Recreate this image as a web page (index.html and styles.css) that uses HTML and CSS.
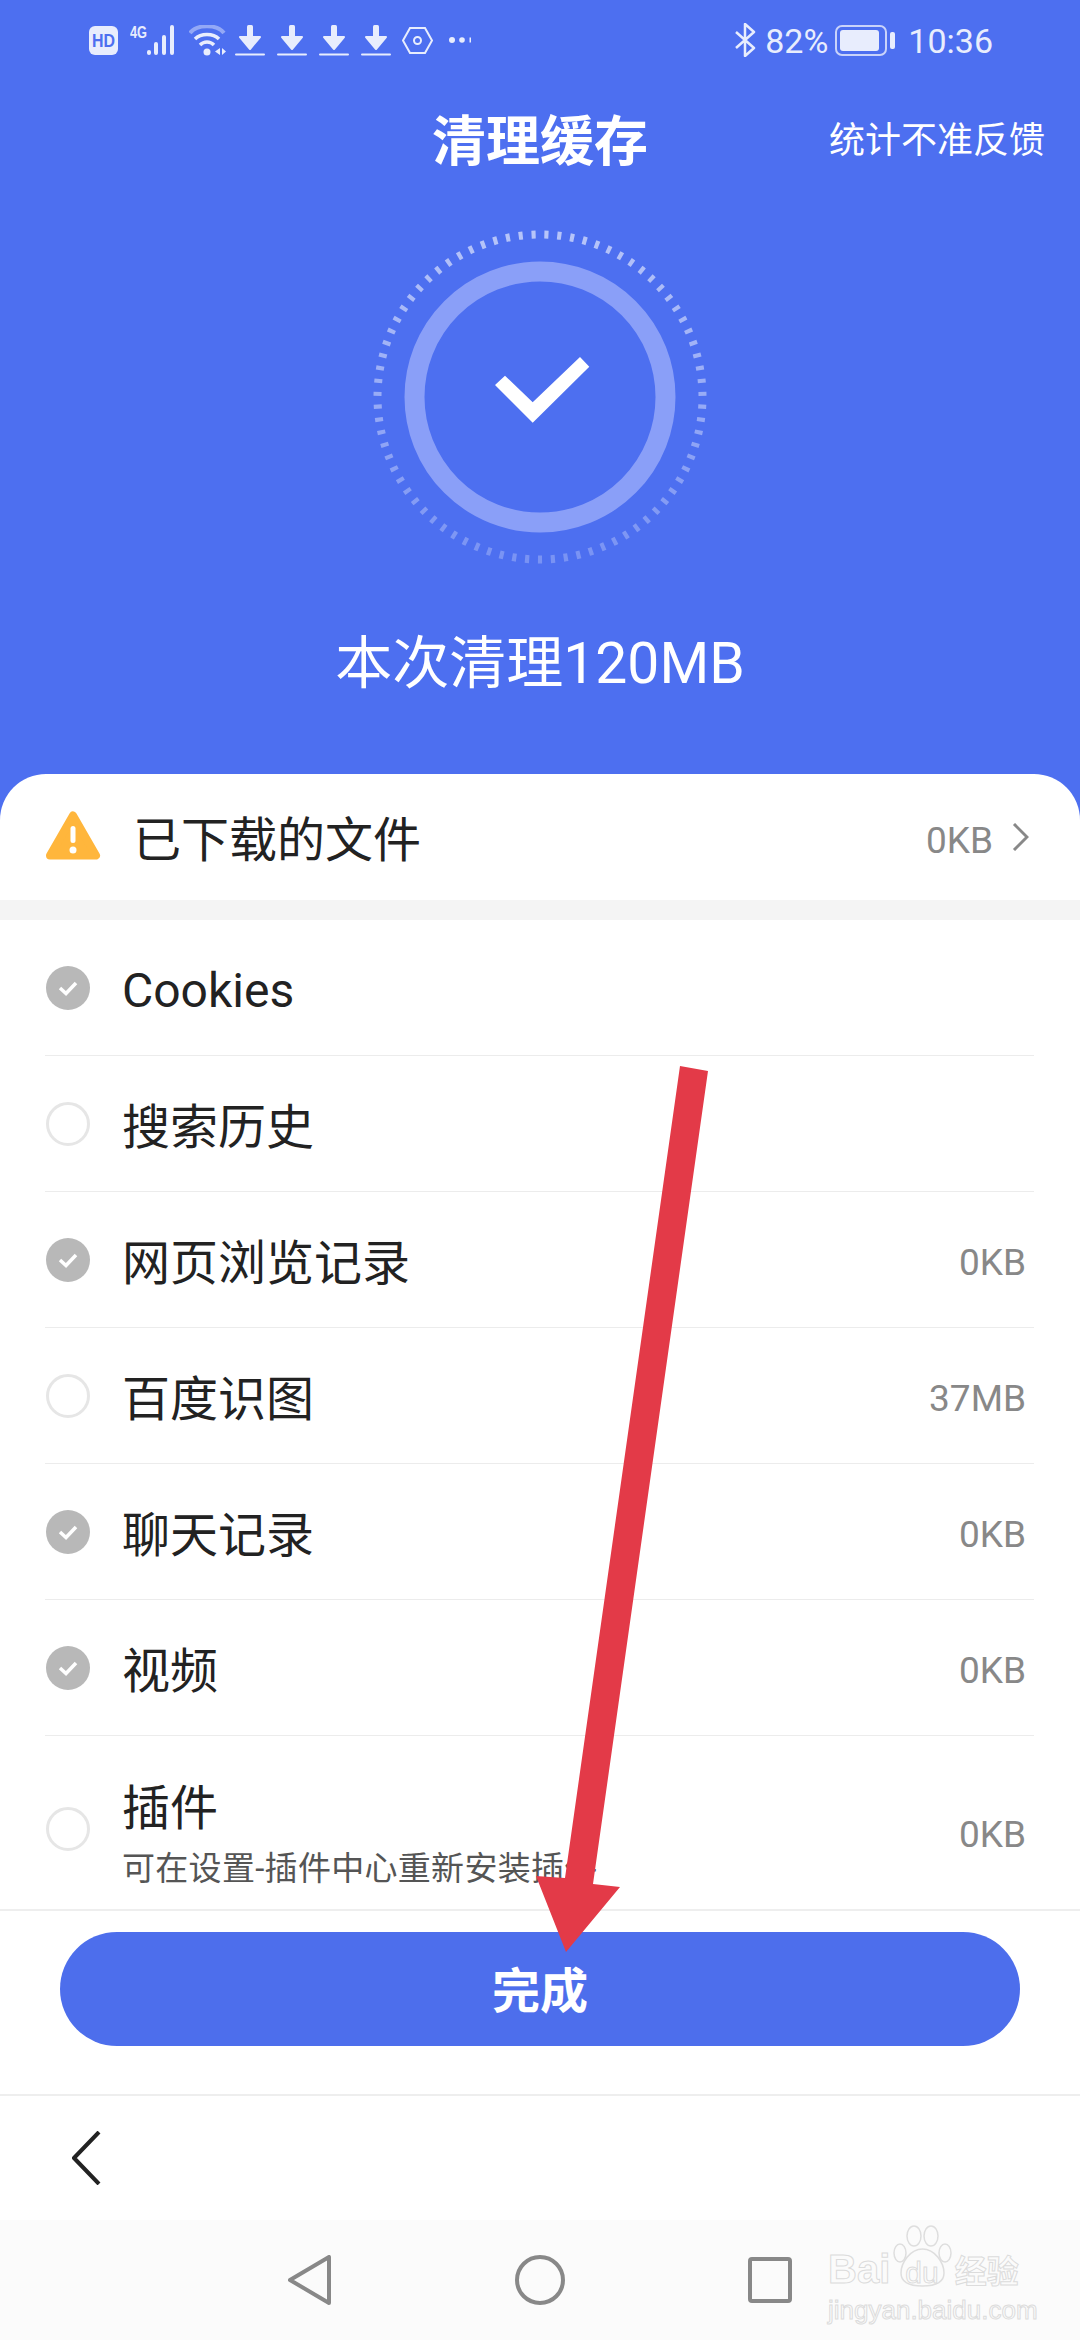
FILE: index.html
```html
<!DOCTYPE html>
<html>
<head>
    <title>清理缓存</title>
    <link rel="stylesheet" href="styles.css">
</head>
<body>
    <div class="page">
        <div class="hero">
            <div class="status-bar">
                <div class="status-left">
                    <svg width="29" height="29" viewBox="0 0 29 29"><rect width="29" height="29" rx="6" fill="#e8edfd"/><text x="14.5" y="21" text-anchor="middle" class="hd-text" textLength="23" lengthAdjust="spacingAndGlyphs">HD</text></svg>
                    <svg class="gap-12" width="49" height="30" viewBox="0 0 49 30"><text x="0" y="13" class="net-text" textLength="17" lengthAdjust="spacingAndGlyphs">4G</text><rect x="17" y="25" width="4" height="5" rx="2" fill="#e8edfd"/><rect x="24" y="17" width="4" height="13" rx="2" fill="#e8edfd"/><rect x="32" y="10" width="4" height="20" rx="2" fill="#e8edfd"/><rect x="40" y="0" width="4" height="30" rx="2" fill="#e8edfd"/></svg>
                    <svg class="gap-10" width="37" height="31" viewBox="0 0 37 31" fill="none" stroke="#e8edfd" stroke-width="3.500"><path d="M1 8C8 -1 28 -1 35 8" stroke-opacity=".45" stroke-width="4"/><path d="M6 14C12 8 24 8 30 14"/><path d="M11 20C15 16 21 16 25 20"/><circle cx="18" cy="27" r="3.500" fill="#e8edfd" stroke="none"/><path d="M31 23L26 26.500L31 30ZM33 23L37 26.500L33 30Z" fill="#e8edfd" stroke="none"/></svg>
                    <svg class="gap-9" width="30" height="31"><use href="#dl"/></svg>
                    <svg class="gap-12" width="30" height="31"><use href="#dl"/></svg>
                    <svg class="gap-12" width="30" height="31"><use href="#dl"/></svg>
                    <svg class="gap-12" width="30" height="31"><use href="#dl"/></svg>
                    <svg class="gap-11" width="31" height="27" viewBox="0 0 31 27" fill="none" stroke="#e8edfd" stroke-width="2"><path d="M1 13.500L8 1H23L30 13.500L23 26H8Z"/><circle cx="15.500" cy="13.500" r="3.500"/></svg>
                    <svg class="gap-16" width="22" height="8" viewBox="0 0 22 8" fill="#e8edfd"><circle cx="3" cy="4" r="3"/><circle cx="13" cy="4" r="2.800"/><rect x="20.500" y="1.500" width="1.500" height="5"/></svg>
                </div>
                <div class="status-right">
                    <svg width="22" height="34" viewBox="0 0 22 34" fill="none" stroke="#e8edfd" stroke-width="2.500" stroke-linejoin="round"><path d="M2 9L20 25L11 33V1L20 9L2 25"/></svg>
                    <span class="status-pct">82%</span>
                    <svg class="battery" width="60" height="31" viewBox="0 0 60 31"><rect x="1" y="1" width="50" height="29" rx="6" fill="none" stroke="#c9d3fa" stroke-width="2"/><rect x="5" y="5" width="39" height="21" rx="3" fill="#e8edfd"/><rect x="55" y="7" width="5" height="17" rx="2" fill="#e8edfd"/></svg>
                    <span class="status-time">10:36</span>
                </div>
            </div>

            <div class="title-bar">
                <span></span>
                <h1>清理缓存</h1>
                <a class="feedback">统计不准反馈</a>
            </div>

            <svg class="ring" width="340" height="340" viewBox="0 0 340 340">
                <defs>
                    <linearGradient id="tick-fade" gradientUnits="userSpaceOnUse" x1="0" y1="0" x2="0" y2="340">
                        <stop offset="0" stop-color="#fff" stop-opacity=".6"/>
                        <stop offset="1" stop-color="#fff" stop-opacity=".24"/>
                    </linearGradient>
                </defs>
                <circle cx="170" cy="170" r="162.500" fill="none" stroke="url(#tick-fade)" stroke-width="8" pathLength="79" stroke-dasharray=".32 .68" stroke-dashoffset=".41"/>
                <circle cx="170" cy="170" r="125.500" fill="none" stroke="#8a9ff8" stroke-width="20"/>
                <polygon points="125,158 135,148.700 162.700,175.300 210,130 219.300,139.700 162.700,195.700" fill="#fff"/>
            </svg>

            <div class="result">本次清理120MB</div>
        </div>

        <div class="sheet">
            <div class="notice">
                <svg class="warn" width="56" height="50" viewBox="0 0 56 50"><path d="M28 4.500L51 44.500H5Z" fill="#ffb63c" stroke="#ffb63c" stroke-width="8" stroke-linejoin="round"/><rect x="25.500" y="15" width="5" height="17" rx="2.500" fill="#fff"/><circle cx="28" cy="39" r="3.500" fill="#fff"/></svg>
                <span class="notice-name">已下载的文件</span>
                <span class="size">0KB</span>
                <svg class="chevron" width="17" height="28" viewBox="0 0 17 28" fill="none" stroke="#888" stroke-width="3"><path d="M2 1L15 14L2 27"/></svg>
            </div>

            <div class="list">
                <div class="row">
                    <span class="check on"><svg width="22" height="18" viewBox="0 0 22 18" fill="none" stroke="#fff" stroke-width="3.500"><path d="M3 9L9 14.500L19 4"/></svg></span>
                    <span class="name latin">Cookies</span>
                </div>
                <div class="row">
                    <span class="check"></span>
                    <span class="name">搜索历史</span>
                </div>
                <div class="row">
                    <span class="check on"><svg width="22" height="18" viewBox="0 0 22 18" fill="none" stroke="#fff" stroke-width="3.500"><path d="M3 9L9 14.500L19 4"/></svg></span>
                    <span class="name">网页浏览记录</span>
                    <span class="size">0KB</span>
                </div>
                <div class="row">
                    <span class="check"></span>
                    <span class="name">百度识图</span>
                    <span class="size">37MB</span>
                </div>
                <div class="row">
                    <span class="check on"><svg width="22" height="18" viewBox="0 0 22 18" fill="none" stroke="#fff" stroke-width="3.500"><path d="M3 9L9 14.500L19 4"/></svg></span>
                    <span class="name">聊天记录</span>
                    <span class="size">0KB</span>
                </div>
                <div class="row">
                    <span class="check on"><svg width="22" height="18" viewBox="0 0 22 18" fill="none" stroke="#fff" stroke-width="3.500"><path d="M3 9L9 14.500L19 4"/></svg></span>
                    <span class="name">视频</span>
                    <span class="size">0KB</span>
                </div>
                <div class="row row-last">
                    <span class="check"></span>
                    <div class="name-block">
                        <div class="name">插件</div>
                        <div class="note">可在设置-插件中心重新安装插件</div>
                    </div>
                    <span class="size">0KB</span>
                </div>
            </div>

            <div class="done-wrap">
                <button class="done">完成</button>
            </div>

            <div class="toolbar">
                <svg width="30" height="54" viewBox="0 0 30 54" fill="none" stroke="#222" stroke-width="4"><path d="M28 1L3 27L28 53" stroke-linejoin="round"/></svg>
            </div>

            <div class="nav-bar">
                <svg width="44" height="50" viewBox="0 0 44 50" fill="none" stroke="#888" stroke-width="4" stroke-linejoin="round"><path d="M41 2V48L2 25Z"/></svg>
                <svg width="50" height="50" viewBox="0 0 50 50" fill="none" stroke="#888" stroke-width="4"><circle cx="25" cy="25" r="23"/></svg>
                <svg width="44" height="46" viewBox="0 0 44 46" fill="none" stroke="#888" stroke-width="4" stroke-linejoin="round"><rect x="2" y="2" width="40" height="42" rx="2"/></svg>
            </div>
        </div>

        <div class="watermark">
            <svg class="paw" width="59" height="62" viewBox="0 0 59 62" fill="none" stroke="#dedede" stroke-width="1.500"><ellipse cx="21" cy="11" rx="7" ry="10"/><ellipse cx="38" cy="11" rx="7" ry="10"/><ellipse cx="7" cy="28" rx="6" ry="9"/><ellipse cx="52" cy="28" rx="6" ry="9"/><path d="M29.500 24C17 24 8 38 8 48C8 58 18 61 29.500 61C41 61 51 58 51 48C51 38 42 24 29.500 24Z"/></svg>
            <div class="wm-logo"><span>Bai</span><span class="wm-du">du</span><span>经验</span></div>
            <div class="wm-url">jingyan.baidu.com</div>
        </div>

        <svg class="arrow" width="1080" height="2340" viewBox="0 0 1080 2340"><polygon points="680,1066 708,1071 593,1884 620,1887 566,1952 536,1876 565,1878" fill="#e33a48"/></svg>
    </div>

    <svg width="0" height="0" class="defs">
        <symbol id="dl" viewBox="0 0 30 31">
            <rect x="12" y="0" width="6" height="13" rx="1.500" fill="#e8edfd"/>
            <path d="M5 12H25L15 24Z" fill="#e8edfd" stroke="#e8edfd" stroke-width="2" stroke-linejoin="round"/>
            <rect x="0" y="28.500" width="30" height="2" rx="1" fill="#e8edfd"/>
        </symbol>
    </svg>
</body>
</html>
```

FILE: styles.css
```css
body {
    margin: 0;
    font-family: Roboto, "Noto Sans CJK SC", sans-serif;
    color: #222;
}
.page {
    position: relative;
    width: 1080px;
    height: 2340px;
    overflow: hidden;
    display: flex;
    flex-direction: column;
    background-color: #4d6ff0;
}
.defs {
    position: absolute;
}
.hero {
    height: 774px;
    flex-shrink: 0;
    display: flex;
    flex-direction: column;
    align-items: center;
    color: #fff;
}
.status-bar {
    width: 100%;
    height: 80px;
    box-sizing: border-box;
    padding: 0 87px 0 89px;
    display: flex;
    justify-content: space-between;
    align-items: center;
}
.status-left,
.status-right {
    display: flex;
    align-items: center;
}
.status-right {
    color: #e8edfd;
    font-size: 34px;
}
.status-right span {
    padding-top: 2px;
}
.status-pct {
    margin-left: 9px;
}
.battery {
    margin-left: 7px;
}
.status-time {
    margin-left: 13px;
}
.gap-9 { margin-left: 9px; }
.gap-10 { margin-left: 10px; }
.gap-11 { margin-left: 11px; }
.gap-12 { margin-left: 12px; }
.gap-16 { margin-left: 16px; }
.hd-text {
    font-family: "Liberation Sans", sans-serif;
    font-size: 19px;
    font-weight: 700;
    fill: #4d6ff0;
}
.net-text {
    font-family: "Liberation Sans", sans-serif;
    font-size: 16px;
    font-weight: 700;
    fill: #e8edfd;
}
.title-bar {
    width: 100%;
    height: 114px;
    box-sizing: border-box;
    padding: 0 35px;
    display: grid;
    grid-template-columns: 1fr auto 1fr;
    align-items: center;
}
.title-bar h1 {
    margin: 0;
    font-size: 54px;
    font-weight: 700;
}
.feedback {
    justify-self: end;
    font-size: 36px;
}
.ring {
    margin-top: 33px;
    flex-shrink: 0;
}
.result {
    margin-top: 57px;
    font-size: 57px;
    line-height: 80px;
}
.sheet {
    flex: 1;
    display: flex;
    flex-direction: column;
    background-color: #ffffff;
    border-radius: 46px 46px 0 0;
}
.notice {
    height: 126px;
    flex-shrink: 0;
    box-sizing: border-box;
    padding: 0 51px 0 45px;
    display: flex;
    align-items: center;
}
.warn {
    margin-bottom: 3px;
}
.notice-name {
    margin-left: 32px;
    font-size: 48px;
    padding-bottom: 2px;
    flex: 1;
}
.chevron {
    margin-left: 19px;
}
.size {
    font-size: 37px;
    color: #888;
    padding-top: 6px;
}
.list {
    border-top: 20px solid #f4f4f4;
}
.row {
    height: 136px;
    box-sizing: border-box;
    margin: 0 46px 0 45px;
    padding: 0 8px 0 1px;
    display: flex;
    align-items: center;
    border-bottom: 1px solid #ececec;
}
.row .name {
    flex: 1;
    margin-left: 32px;
    font-size: 48px;
    padding-bottom: 2px;
}
.row .latin {
    padding: 5px 0 0;
}
.check {
    width: 44px;
    height: 44px;
    flex-shrink: 0;
    box-sizing: border-box;
    border: 3px solid #e6e6e6;
    border-radius: 50%;
    display: flex;
    justify-content: center;
    align-items: center;
}
.check.on {
    background-color: #b8b8b8;
    border: none;
}
.row-last {
    height: 173px;
    padding-top: 43px;
    border-bottom: none;
    align-items: flex-start;
}
.row-last .check {
    margin-top: 28px;
}
.row-last .size {
    margin-top: 25px;
    line-height: 50px;
}
.name-block {
    flex: 1;
    margin-left: 32px;
}
.name-block .name {
    margin-left: 0;
    padding: 0;
    line-height: 60px;
}
.note {
    margin-top: 5px;
    font-size: 33px;
    line-height: 50px;
    letter-spacing: 0.3px;
    color: #555;
}
.done-wrap {
    padding: 21px 60px 48px;
    border-top: 2px solid #eeeeee;
    border-bottom: 2px solid #eeeeee;
}
.done {
    display: block;
    width: 100%;
    height: 114px;
    padding: 0 0 4px;
    border: none;
    border-radius: 57px;
    background-color: #4d6eec;
    color: #fff;
    font-family: inherit;
    font-size: 48px;
    font-weight: 700;
}
.toolbar {
    height: 124px;
    box-sizing: border-box;
    padding-left: 71px;
    display: flex;
    align-items: center;
}
.nav-bar {
    flex: 1;
    background-color: #fbfbfb;
    display: flex;
    justify-content: center;
    align-items: center;
    gap: 183px;
}
.watermark {
    position: absolute;
    left: 828px;
    top: 2225px;
    width: 192px;
    color: #fbfbfb;
    -webkit-text-stroke: 1px #dcdcdc;
}
.paw {
    position: absolute;
    left: 65px;
    top: 0;
}
.wm-logo {
    position: relative;
    margin-top: 22px;
    display: flex;
    align-items: baseline;
    font-family: "Liberation Sans", "Noto Sans CJK SC", sans-serif;
    font-size: 40px;
    font-weight: 700;
    line-height: 44px;
}
.wm-du {
    margin: 0 16px 0 15px;
    font-size: 30px;
    font-weight: 400;
}
.wm-logo span:last-child {
    font-size: 32px;
}
.wm-url {
    font-family: "Liberation Sans", sans-serif;
    font-size: 26px;
    line-height: 30px;
}
.arrow {
    position: absolute;
    left: 0;
    top: 0;
    pointer-events: none;
}
```
